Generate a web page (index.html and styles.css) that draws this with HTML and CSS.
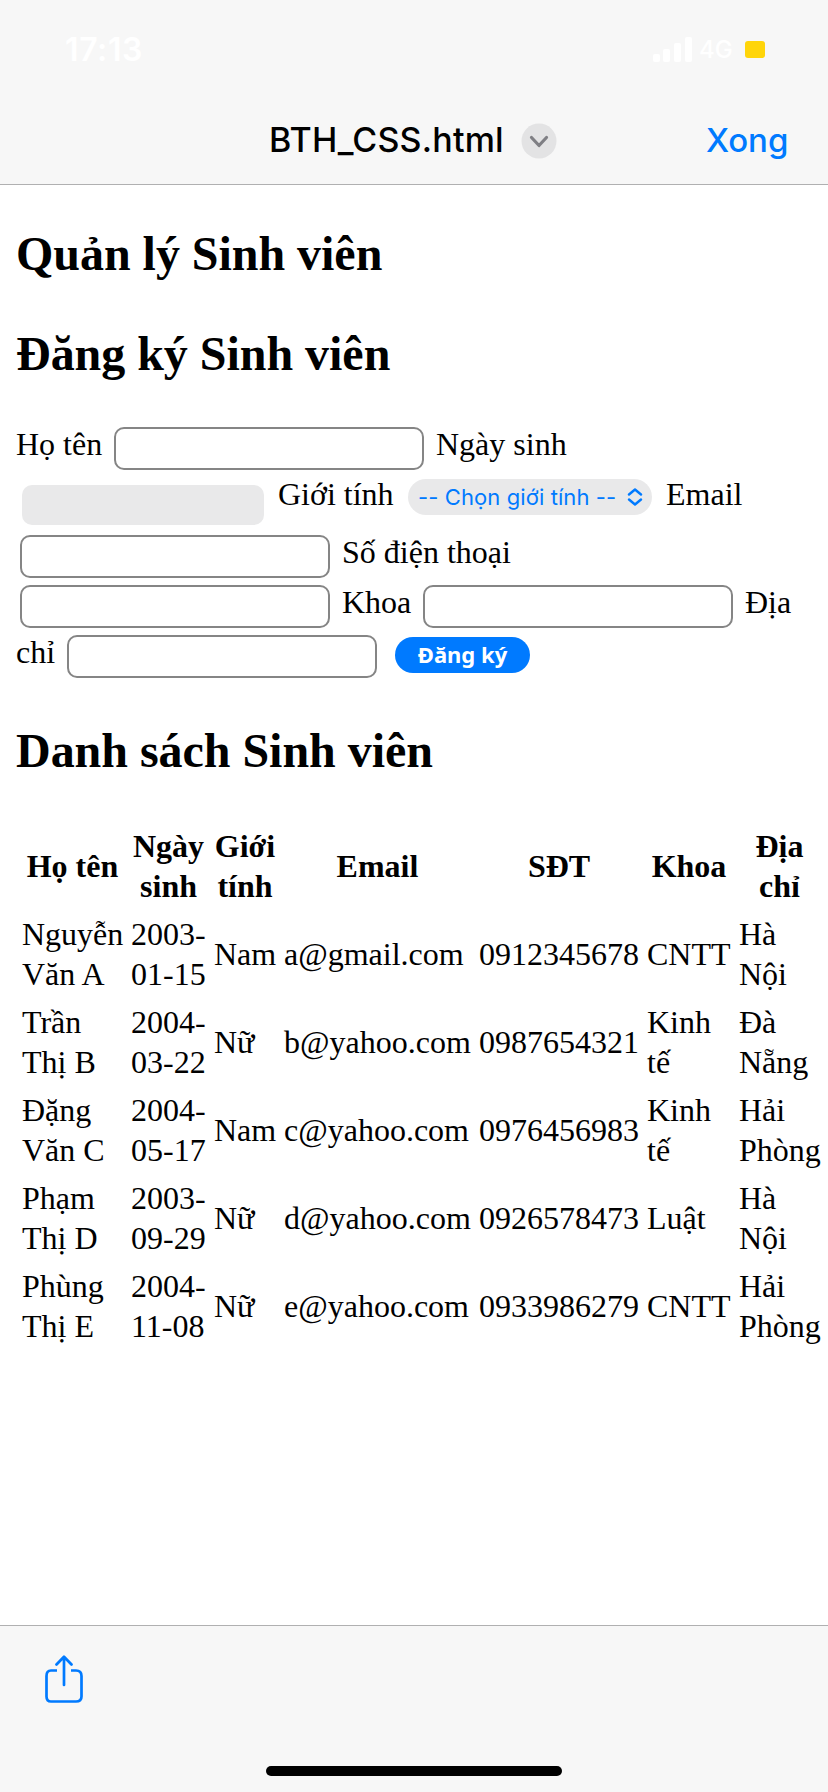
FILE: index.html
```html
<!DOCTYPE html>
<html lang="vi">
<head>
<meta charset="utf-8">
<title>BTH_CSS.html</title>
<link rel="stylesheet" href="styles.css">
</head>
<body>
<header class="topbar">
  <div class="status">
    <span class="clock">17:13</span>
    <svg class="signal" width="40" height="25" viewBox="0 0 40 25" fill="#fff"><rect x="0" y="17" width="7" height="8" rx="2"/><rect x="10" y="12" width="7" height="13" rx="2"/><rect x="21" y="6" width="7" height="19" rx="2"/><rect x="32" y="0" width="7" height="25" rx="2"/></svg>
    <span class="network">4G</span>
    <span class="battery"></span>
  </div>
  <nav class="nav">
    <span class="title">BTH_CSS.html</span>
    <svg class="chevron" width="36" height="36" viewBox="0 0 36 36" fill="none"><circle cx="18" cy="18" r="17.5" fill="#e3e3e4"/><path d="M10.5 14.5 18 22.5 25.500 14.500" stroke="#7f7f84" stroke-width="3.200" stroke-linecap="round" stroke-linejoin="round"/></svg>
    <span class="done">Xong</span>
  </nav>
</header>
<main class="page">
  <h2 class="heading">Quản lý Sinh viên</h2>
  <h2 class="heading">Đăng ký Sinh viên</h2>
  <form class="form">
    <div class="line"><label class="label-name">Họ tên</label><input class="field" type="text"><label class="after">Ngày sinh</label></div>
    <div class="line line-tall"><span class="date"></span><label class="label-gender">Giới tính</label><span class="select"><span class="select-text">-- Chọn giới tính --</span><svg width="16" height="18" viewBox="0 0 16 18" fill="none" stroke="#007aff" stroke-width="2.400" stroke-linecap="round" stroke-linejoin="round"><path d="M2 6.500 8 1.500 14 6.500M2 11.500 8 16.500 14 11.500"/></svg></span><label class="label-email">Email</label></div>
    <div class="line"><input class="field first" type="text"><label class="after">Số điện thoại</label></div>
    <div class="line"><input class="field first" type="text"><label class="after label-dept">Khoa</label><input class="field" type="text"><label class="after">Địa</label></div>
    <div class="line"><label class="label-addr">chỉ</label><input class="field" type="text"><button class="submit" type="button">Đăng ký</button></div>
  </form>
  <h2 class="heading heading-list">Danh sách Sinh viên</h2>
  <table class="students">
    <colgroup><col class="c1"><col class="c2"><col class="c3"><col class="c4"><col class="c5"><col class="c6"><col class="c7"></colgroup>
    <tr><th>Họ tên</th><th>Ngày<br>sinh</th><th>Giới<br>tính</th><th>Email</th><th>SĐT</th><th>Khoa</th><th>Địa<br>chỉ</th></tr>
    <tr><td>Nguyễn<br>Văn A</td><td>2003-<br>01-15</td><td>Nam</td><td>a@gmail.com</td><td>0912345678</td><td>CNTT</td><td>Hà<br>Nội</td></tr>
    <tr><td>Trần<br>Thị B</td><td>2004-<br>03-22</td><td>Nữ</td><td>b@yahoo.com</td><td>0987654321</td><td>Kinh<br>tế</td><td>Đà<br>Nẵng</td></tr>
    <tr><td>Đặng<br>Văn C</td><td>2004-<br>05-17</td><td>Nam</td><td>c@yahoo.com</td><td>0976456983</td><td>Kinh<br>tế</td><td>Hải<br>Phòng</td></tr>
    <tr><td>Phạm<br>Thị D</td><td>2003-<br>09-29</td><td>Nữ</td><td>d@yahoo.com</td><td>0926578473</td><td>Luật</td><td>Hà<br>Nội</td></tr>
    <tr><td>Phùng<br>Thị E</td><td>2004-<br>11-08</td><td>Nữ</td><td>e@yahoo.com</td><td>0933986279</td><td>CNTT</td><td>Hải<br>Phòng</td></tr>
  </table>
</main>
<footer class="toolbar">
  <svg class="share" width="40" height="50" viewBox="0 0 40 50" fill="none" stroke="#007aff" stroke-width="2.700" stroke-linecap="round" stroke-linejoin="round"><path d="M13 15.500H7Q2.500 15.500 2.500 21V41.500Q2.500 46.500 7 46.500H32Q37.500 46.500 37.500 41.500V21Q37.500 15.500 32 15.500H27" stroke-linecap="butt"/><path d="M20 30V2M12.500 9.500 20 1.700 27.500 9.500"/></svg>
  <div class="home"></div>
</footer>
</body>
</html>
```
FILE: styles.css
```css
* { box-sizing: border-box; }
body {
  margin: 0;
  width: 828px;
  height: 1792px;
  display: flex;
  flex-direction: column;
  overflow: hidden;
  background: #fff;
  color: #000;
  font: 32px/40px "Liberation Serif", serif;
}
.topbar {
  flex: none;
  height: 185px;
  background: #f7f7f7;
  border-bottom: 1px solid #b0b0b1;
  font-family: Inter, sans-serif;
}
.status {
  height: 100px;
  padding: 30px 0 0 65px;
  display: flex;
  align-items: flex-start;
  color: #fff;
}
.clock { width: 588px; font-size: 32px; font-weight: 600; letter-spacing: 0.6px; }
.signal { margin-top: 7px; }
.network { width: 52px; padding-left: 6px; font-size: 24px; font-weight: 500; }
.battery { width: 20px; height: 17px; margin-top: 11px; border-radius: 3px; background: #ffd50a; }
.nav { height: 84px; padding: 20px 0 0 269px; display: flex; align-items: flex-start; white-space: nowrap; }
.title { width: 252px; font-size: 34px; font-weight: 500; letter-spacing: 0.2px; }
.chevron { margin-top: 3px; }
.done { margin-left: 149px; font-size: 33px; font-weight: 500; color: #007aff; }

.page { flex: 1; padding: 41px 0 0 16px; }
.heading { margin: 0 0 44px; font-size: 48px; line-height: 56px; font-weight: 700; letter-spacing: -0.03px; }
.heading-list { margin: 41px 0; }
.form { margin: -2px 0 0; }
.line { height: 50px; display: flex; align-items: flex-start; white-space: nowrap; }
.line-tall { height: 58px; }
.field {
  flex: none;
  width: 310px;
  height: 43px;
  margin: 3px 0 0;
  padding: 0 8px;
  border: 2px solid #858585;
  border-radius: 10px;
  background: #fff;
  font-size: 22px;
}
.first { margin-left: 4px; }
.after { margin-left: 12px; }
.label-name { width: 98px; }
.label-dept { width: 81px; }
.label-addr { width: 51px; }
.date { width: 242px; height: 40px; margin: 11px 0 0 6px; border-radius: 10px; background: #e9e9ea; }
.label-gender { width: 130px; margin-left: 14px; }
.select {
  width: 244px;
  height: 36px;
  margin-top: 5px;
  padding: 0 9px 0 10px;
  display: flex;
  align-items: center;
  justify-content: space-between;
  border-radius: 18px;
  background: #e9e9ea;
  color: #007aff;
  font: 22px/36px Inter, sans-serif;
}
.select-text { letter-spacing: 0.1px; }
.label-email { margin-left: 14px; }
.submit {
  width: 135px;
  height: 36px;
  margin: 5px 0 0 18px;
  padding: 0 0 2px;
  border: 0;
  border-radius: 18px;
  background: #007aff;
  color: #fff;
  font: 700 22px/34px "Noto Sans", sans-serif;
}

.students { table-layout: fixed; width: 810px; border-spacing: 4px; border-collapse: separate; }
.students th, .students td { padding: 2px; height: 84px; vertical-align: middle; white-space: nowrap; }
.students td { text-align: left; }
.c1 { width: 105px; }
.c2 { width: 79px; }
.c3 { width: 66px; }
.c4 { width: 191px; }
.c5 { width: 164px; }
.c6 { width: 88px; }
.c7 { width: 85px; }

.toolbar { flex: none; height: 167px; padding: 29px 0 0 44px; background: #f7f7f7; border-top: 1px solid #b0b0b1; }
.share { display: block; }
.home { width: 296px; height: 10px; margin: 61px 0 0 222px; border-radius: 5px; background: #000; }
```
